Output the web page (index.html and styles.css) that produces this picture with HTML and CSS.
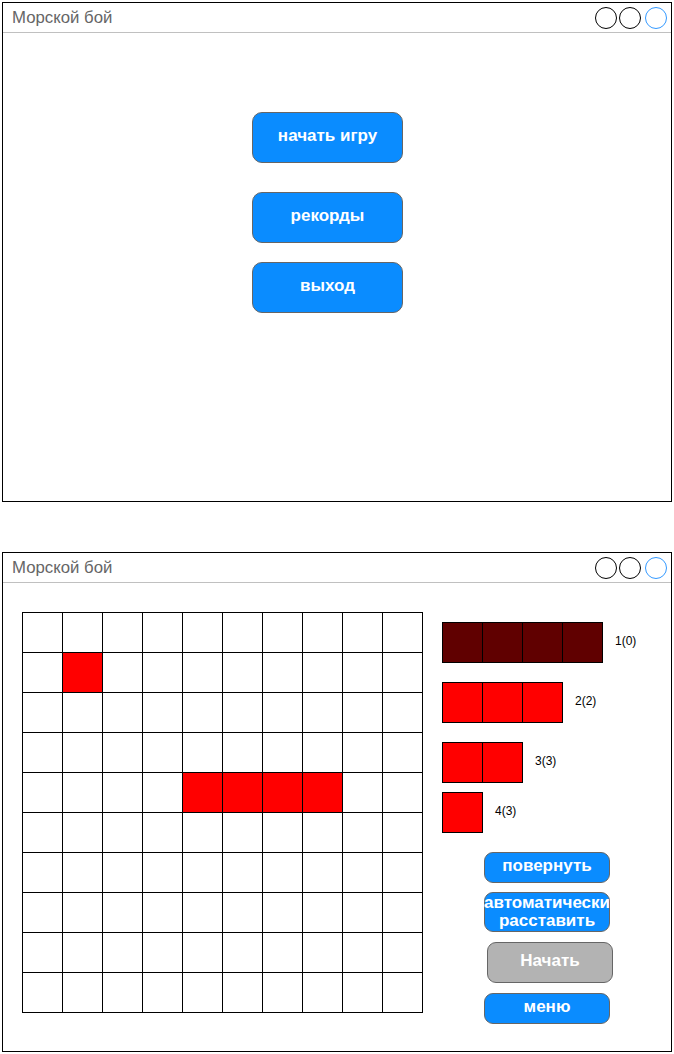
FILE: index.html
```html
<!DOCTYPE html>
<html lang="ru">
<head>
<meta charset="utf-8">
<title>Морской бой</title>
<link rel="stylesheet" href="styles.css">
</head>
<body>
<div class="window">
  <div class="titlebar">
    <span class="title">Морской бой</span>
    <div class="controls">
      <span class="dot"></span><span class="dot"></span><span class="dot blue"></span>
    </div>
  </div>
  <div class="menu">
    <button class="btn big">начать игру</button>
    <button class="btn big second">рекорды</button>
    <button class="btn big third">выход</button>
  </div>
</div>

<div class="window second-window">
  <div class="titlebar">
    <span class="title">Морской бой</span>
    <div class="controls">
      <span class="dot"></span><span class="dot"></span><span class="dot blue"></span>
    </div>
  </div>
  <div class="game">
    <div class="board" id="board"></div>
    <div class="panel">
      <div class="ship-row">
        <div class="ship dark"><i></i><i></i><i></i><i></i></div>
        <span class="label">1(0)</span>
      </div>
      <div class="ship-row">
        <div class="ship"><i></i><i></i><i></i></div>
        <span class="label">2(2)</span>
      </div>
      <div class="ship-row">
        <div class="ship"><i></i><i></i></div>
        <span class="label">3(3)</span>
      </div>
      <div class="ship-row close">
        <div class="ship"><i></i></div>
        <span class="label">4(3)</span>
      </div>
      <div class="actions">
        <button class="btn small">повернуть</button>
        <button class="btn tall auto">автоматически расставить</button>
        <button class="btn tall gray">Начать</button>
        <button class="btn small">меню</button>
      </div>
    </div>
  </div>
</div>
<script>
  var board = document.getElementById('board');
  var hits = {11: 1, 44: 1, 45: 1, 46: 1, 47: 1};
  for (var i = 0; i < 100; i++) {
    var c = document.createElement('div');
    c.className = 'cell' + (hits[i] ? ' ship-cell' : '');
    board.appendChild(c);
  }
</script>
</body>
</html>
```

FILE: styles.css
```css
html, body {
  margin: 0;
  padding: 0;
  background: #fff;
}
body {
  padding: 2px;
  font-family: "Liberation Sans", Arial, sans-serif;
}
.window {
  width: 670px;
  height: 500px;
  box-sizing: border-box;
  border: 1px solid #000;
  background: #fff;
}
.second-window {
  margin-top: 50px;
}
.titlebar {
  height: 30px;
  box-sizing: border-box;
  border-bottom: 1px solid #c0c0c0;
  display: flex;
  align-items: center;
  justify-content: space-between;
  padding: 0 4px 0 9px;
}
.title {
  font-size: 16.8px;
  color: #666;
}
.controls {
  display: flex;
  gap: 2px;
}
.dot {
  width: 22px;
  height: 22px;
  box-sizing: border-box;
  border: 1px solid #000;
  border-radius: 50%;
}
.dot.blue {
  border-color: #3399ff;
  margin-left: 2px;
}
.menu {
  display: flex;
  flex-direction: column;
  align-items: flex-start;
  padding: 79px 0 0 249px;
}
.btn {
  font-family: "Liberation Sans", Arial, sans-serif;
  font-weight: bold;
  font-size: 17px;
  color: #fff;
  background: #0a8cff;
  border: 1px solid #666;
  box-sizing: border-box;
  padding: 0 0 3px 0;
  white-space: nowrap;
  display: flex;
  align-items: center;
  justify-content: center;
}
.btn.big {
  width: 151px;
  height: 51px;
  border-radius: 10px;
  padding-bottom: 4px;
}
.btn.big.second { margin-top: 29px; }
.btn.big.third { margin-top: 19px; }
.game {
  display: flex;
  align-items: flex-start;
  padding: 29px 0 0 19px;
  gap: 19px;
}
.board {
  display: grid;
  grid-template-columns: repeat(10, 40px);
  grid-auto-rows: 40px;
  border-right: 1px solid #000;
  border-bottom: 1px solid #000;
}
.cell {
  box-sizing: border-box;
  border-left: 1px solid #000;
  border-top: 1px solid #000;
}
.cell.ship-cell {
  background: #ff0000;
}
.panel {
  margin-top: 10px;
  display: flex;
  flex-direction: column;
}
.ship-row {
  display: flex;
  align-items: center;
  gap: 12px;
  margin-bottom: 19px;
}
.ship-row.close {
  margin-top: -10px;
}
.ship {
  display: flex;
  border-right: 1px solid #000;
  border-bottom: 1px solid #000;
}
.ship i {
  width: 40px;
  height: 40px;
  box-sizing: border-box;
  border-left: 1px solid #000;
  border-top: 1px solid #000;
  background: #ff0000;
}
.ship.dark i {
  background: #600000;
}
.label {
  font-size: 12px;
  color: #000;
  margin-top: -3px;
}
.actions {
  display: flex;
  flex-direction: column;
  align-items: flex-start;
  gap: 10px;
  padding-left: 42px;
}
.btn.small {
  width: 126px;
  height: 31px;
  border-radius: 9px;
}
.btn.tall {
  width: 126px;
  height: 40px;
  border-radius: 9px;
  white-space: normal;
  line-height: 18px;
  text-align: center;
}
.btn.auto {
  margin-top: -1px;
  padding-bottom: 1px;
}
.btn.gray {
  background: #b3b3b3;
  margin-left: 3px;
  height: 41px;
}
```
